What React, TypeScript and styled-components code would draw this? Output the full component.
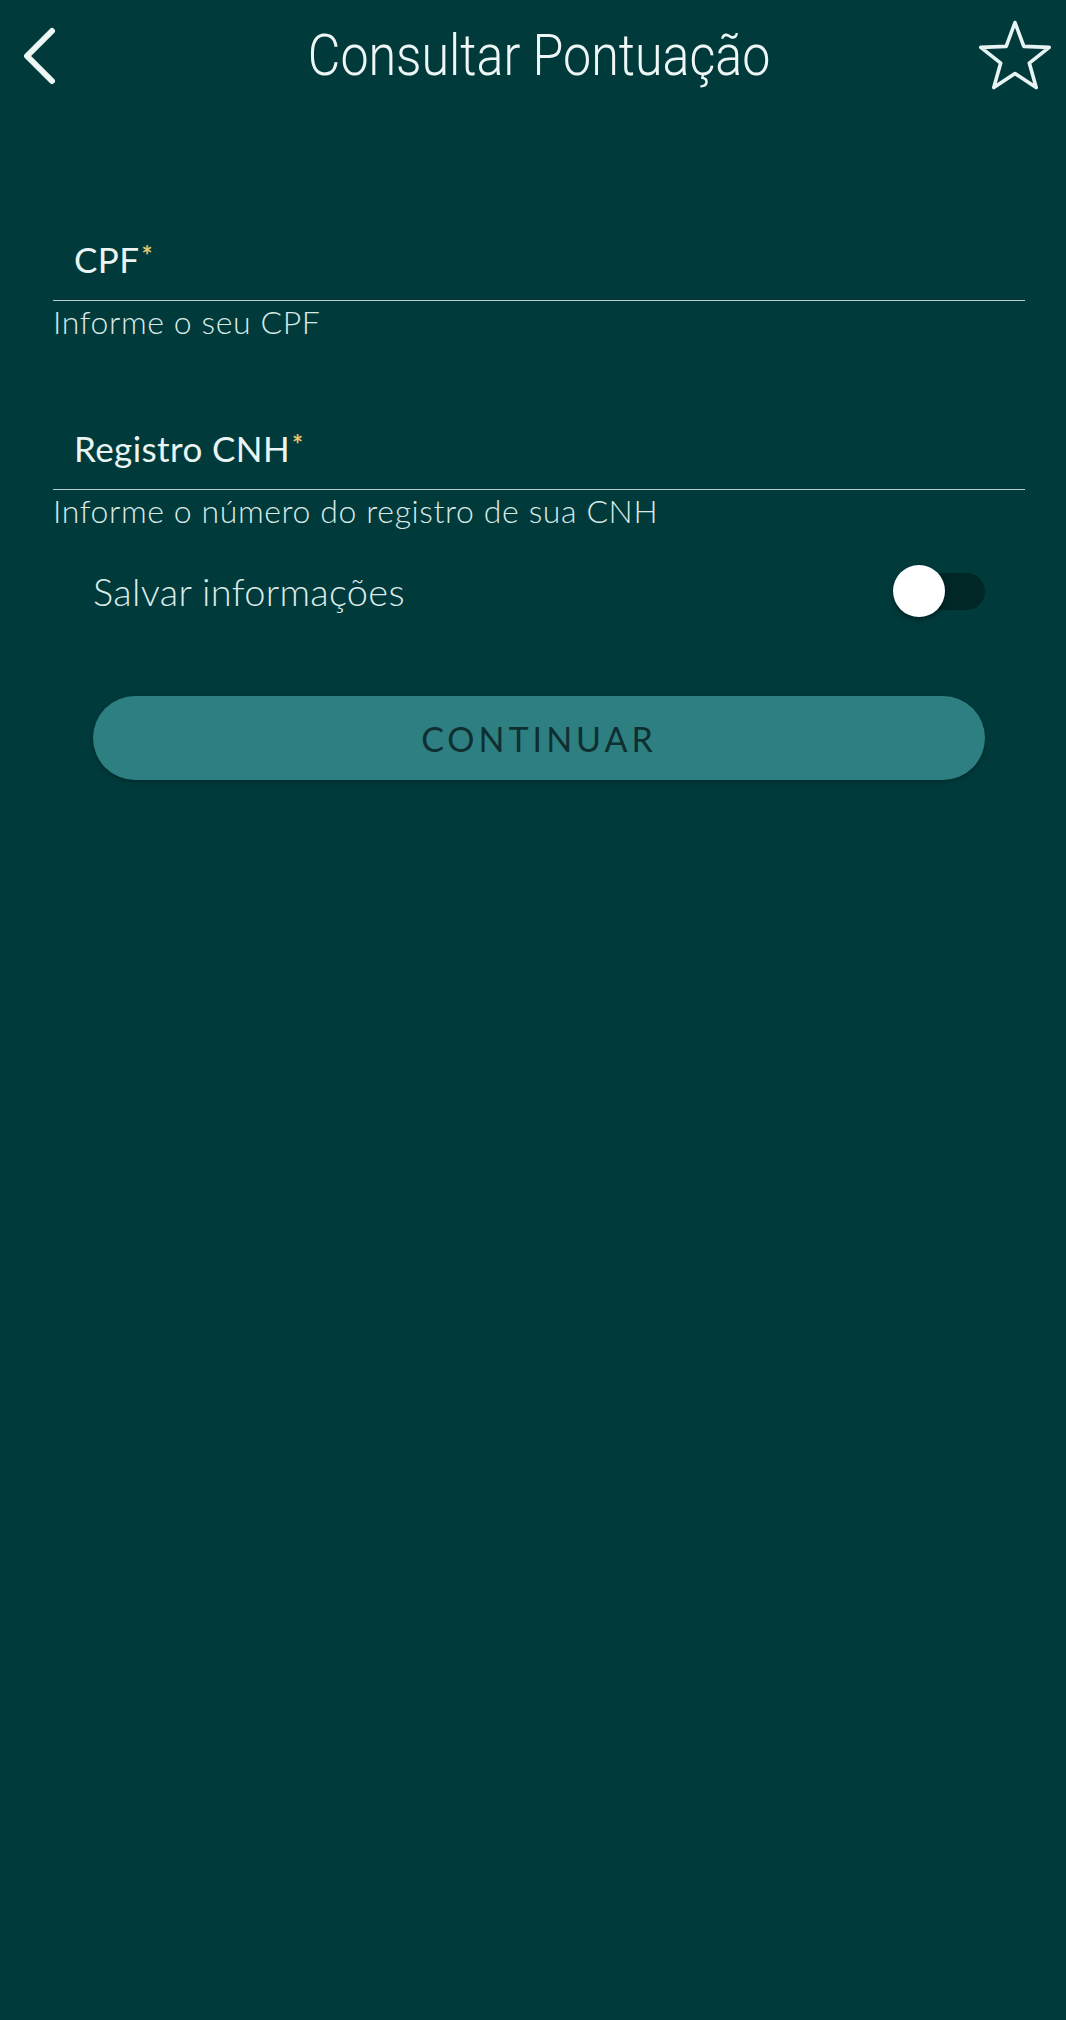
import React, { useState } from "react";
import styled, { createGlobalStyle } from "styled-components";

const GlobalStyle = createGlobalStyle`
  html, body {
    margin: 0;
    padding: 0;
    background: #003a3b;
  }
  * { box-sizing: border-box; }
`;

const Page = styled.div`
  min-height: 2020px;
  background: #003a3b;
  color: #e4f1ef;
  font-family: Lato, "Noto Sans", sans-serif;
`;

const Header = styled.header`
  display: grid;
  grid-template-columns: 100px 1fr 100px;
  align-items: center;
  height: 110px;
`;

const BackButton = styled.button`
  display: flex;
  align-items: center;
  background: none;
  border: 0;
  padding: 0 0 0 21px;
  cursor: pointer;
`;

const StarButton = styled.button`
  display: flex;
  justify-content: flex-end;
  background: none;
  border: 0;
  padding: 0 13px 0 0;
  cursor: pointer;
`;

const Title = styled.h1`
  margin: 0;
  padding-left: 14px;
  text-align: center;
  font-family: Roboto, "Liberation Sans", sans-serif;
  font-weight: 300;
  font-size: 58px;
  color: #eef7f6;
  transform: scaleX(0.865);
  white-space: nowrap;
`;

const Form = styled.form`
  display: flex;
  flex-direction: column;
  padding: 117px 41px 0 53px;
`;

const Field = styled.div<{ $gap?: number }>`
  display: flex;
  flex-direction: column;
  margin-bottom: ${(p) => p.$gap ?? 0}px;
`;

const InputLine = styled.div`
  display: flex;
  align-items: flex-end;
  height: 74px;
  padding: 0 0 23px 21px;
  border-bottom: 1.5px solid #b7cccb;
`;

const Label = styled.label`
  font-size: 35px;
  line-height: 1;
  font-weight: 400;
  letter-spacing: 0.4px;
  color: #eaf5f3;
`;

const Required = styled.span`
  color: #e8c46c;
  font-size: 26px;
  font-weight: 700;
  vertical-align: top;
  margin-left: 2px;
`;

const Helper = styled.div`
  margin-top: 3px;
  font-size: 32px;
  font-weight: 300;
  letter-spacing: 0.6px;
  line-height: 36px;
  color: #d9e9e7;
`;

const Options = styled.div`
  display: flex;
  flex-direction: column;
  gap: 77px;
  padding: 0 81px 0 93px;
  margin-top: 34px;
`;

const ToggleRow = styled.div`
  display: flex;
  align-items: center;
  justify-content: space-between;
  height: 56px;
`;

const ToggleLabel = styled.span`
  font-size: 38px;
  font-weight: 300;
  letter-spacing: 0.3px;
  color: #dcebe9;
`;

const Track = styled.button<{ $on: boolean }>`
  position: relative;
  width: 90px;
  height: 37px;
  border: 0;
  padding: 0;
  border-radius: 19px;
  background: ${(p) => (p.$on ? "#2e7f82" : "#002626")};
  cursor: pointer;
`;

const Knob = styled.span<{ $on: boolean }>`
  position: absolute;
  top: -8px;
  left: ${(p) => (p.$on ? "40px" : "-2px")};
  width: 52px;
  height: 52px;
  border-radius: 50%;
  background: #ffffff;
  box-shadow: 0 3px 5px rgba(0, 0, 0, 0.35);
`;

const PrimaryButton = styled.button`
  height: 84px;
  border: 0;
  border-radius: 42px;
  background: #2e7f82;
  color: #0e2f30;
  font-family: Lato, "Noto Sans", sans-serif;
  font-size: 34px;
  font-weight: 400;
  letter-spacing: 4px;
  box-shadow: 0 2px 4px rgba(0, 0, 0, 0.25);
  cursor: pointer;
`;

function ChevronLeft() {
  return (
    <svg width="40" height="60" viewBox="0 0 40 60" fill="none">
      <polyline
        points="31,6 6,31 31,56"
        stroke="#eef7f6"
        strokeWidth="6"
        strokeLinecap="round"
        strokeLinejoin="round"
      />
    </svg>
  );
}

function StarOutline() {
  return (
    <svg width="76" height="72" viewBox="-2 -2 76 72" fill="none">
      <polygon
        points="36,1.5 44.8,25.4 70.2,26.4 50.3,42.1 57.2,66.6 36,52.5 14.8,66.6 21.7,42.1 1.8,26.4 27.2,25.4"
        stroke="#e8f4f3"
        strokeWidth="3.6"
        strokeLinejoin="round"
      />
    </svg>
  );
}

export default function App() {
  const [save, setSave] = useState(false);

  return (
    <Page>
      <GlobalStyle />
      <Header>
        <BackButton aria-label="Voltar">
          <ChevronLeft />
        </BackButton>
        <Title>Consultar Pontuação</Title>
        <StarButton aria-label="Favoritar">
          <StarOutline />
        </StarButton>
      </Header>

      <Form onSubmit={(e) => e.preventDefault()}>
        <Field $gap={76}>
          <InputLine>
            <Label>
              CPF<Required>*</Required>
            </Label>
          </InputLine>
          <Helper>Informe o seu CPF</Helper>
        </Field>
        <Field>
          <InputLine>
            <Label>
              Registro CNH<Required>*</Required>
            </Label>
          </InputLine>
          <Helper>Informe o número do registro de sua CNH</Helper>
        </Field>
      </Form>

      <Options>
        <ToggleRow>
          <ToggleLabel>Salvar informações</ToggleLabel>
          <Track type="button" $on={save} onClick={() => setSave(!save)}>
            <Knob $on={save} />
          </Track>
        </ToggleRow>
        <PrimaryButton type="button">CONTINUAR</PrimaryButton>
      </Options>
    </Page>
  );
}
